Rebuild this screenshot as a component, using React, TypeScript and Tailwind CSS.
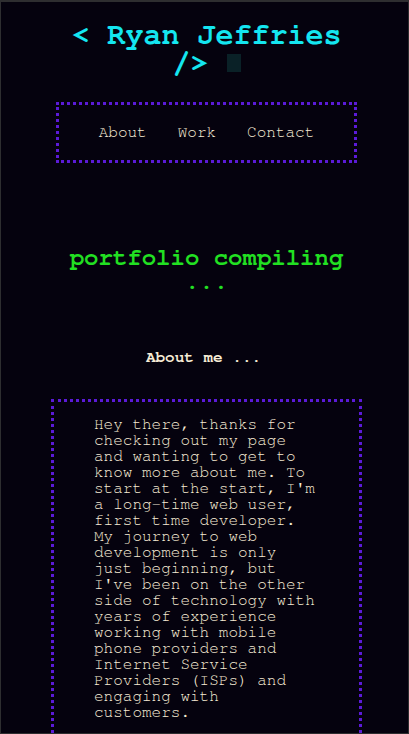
import React from "react";

export default function App() {
  return (
    <div className="min-h-screen bg-[#05020e] pl-[4px] pt-[21px] pb-[40px] font-['Nimbus_Mono_PS','Nimbus_Mono_L','FreeMono','Courier_New','Liberation_Mono',monospace]">
      <div className="pointer-events-none fixed inset-0 border-t-2 border-l border-r border-b border-[#2e2e30]" />
      <h1 className="mx-auto w-[300px] text-center text-[30px] leading-[28px] font-bold text-[#14e6f0]">
        &lt; Ryan Jeffries /&gt;{" "}
        <span className="inline-block h-[18px] w-[14px] bg-[#0a2127] align-baseline" />
      </h1>

      <nav className="mx-auto mt-[25px] flex h-[61px] w-[301px] items-center justify-center gap-[31px] border-[3px] border-dotted border-[#5b1ad8] pb-[2px] text-[16px] leading-[18px] text-[#f7ecd6]">
        <a>About</a>
        <a>Work</a>
        <a>Contact</a>
      </nav>

      <h2 className="mx-auto mt-[83px] w-[300px] text-center text-[24px] leading-[24px] font-bold text-[#22e022]">
        portfolio compiling ...
      </h2>

      <h3 className="mt-[54px] pr-[6px] text-center text-[16px] leading-[18px] font-bold text-[#f7ecd6]">
        About me ...
      </h3>

      <section className="mx-auto mt-[33px] w-[311px] border-[3px] border-dotted border-[#5b1ad8] px-[40px] pt-[14px] pb-[16px]">
        <p className="text-[16px] leading-[16px] text-[#f7ecd6]">
          Hey there, thanks for checking out my page and wanting to get to know more about me. To start at the start, I'm a long-time web user, first time developer. My journey to web development is only just beginning, but I've been on the other side of technology with years of experience working with mobile phone providers and Internet Service Providers (ISPs) and engaging with customers.
        </p>
      </section>
    </div>
  );
}
